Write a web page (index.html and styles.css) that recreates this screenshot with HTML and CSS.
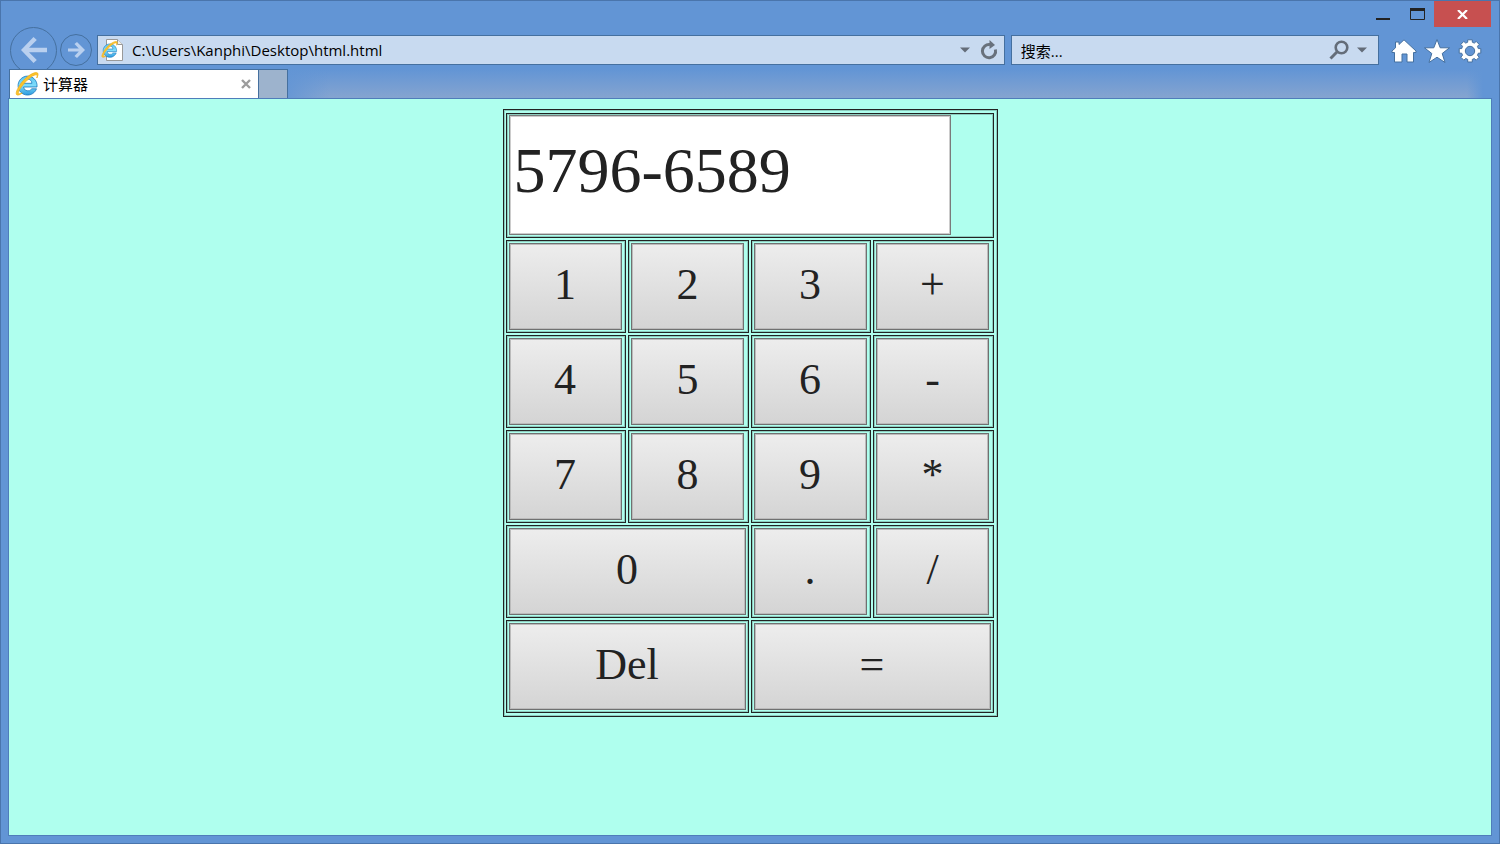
FILE: index.html
```html
<!DOCTYPE html>
<html lang="zh-CN">
	<head>
		<meta charset="UTF-8">
		<title>计算器</title>
		<link rel="stylesheet" href="styles.css">
	</head>
	<body>
		<!--渐变给两个ie图标用-->
		<svg class="defs" width="0" height="0">
			<defs>
				<linearGradient id="blue" x1="0" y1="0" x2="0" y2="1">
					<stop offset="0" stop-color="#5cc4f0"/>
					<stop offset=".5" stop-color="#7fdcfb"/>
					<stop offset="1" stop-color="#2b9ade"/>
				</linearGradient>
				<symbol id="ie" viewBox="0 0 24 24">
					<path d="M22 15H8.500a4.500 4.500 0 0 0 8.300 1.800h4.700A9.500 9.500 0 1 1 22 12.500zM8.500 11.300h8.400a4.200 4.200 0 0 0-8.400 0z" fill="url(#blue)" fill-rule="evenodd" stroke="#1b78bd" stroke-width=".8"/>
					<path d="M4 14.500C1.200 19 .4 22.600 2.200 23c1.200.3 3-.5 5-2-1.800.9-3.200 1.100-3.600.5-.7-1 .7-4 3.500-7.600C11.500 8.200 17 3.500 20.500 2.800c1.700-.3 2.100.8 1.300 3.200C23.500 2.700 23.500.8 21.500.6 17.500.2 8.500 6.500 4 14.500z" fill="#fcc32c" stroke="#f0b020" stroke-width=".8"/>
				</symbol>
			</defs>
		</svg>
		<div class="win"><!--窗口-->
			<div class="title"><!--标题栏-->
				<button class="min" aria-label="最小化"><svg width="14" height="2"><path d="M0 0h14v2H0z" fill="#222"/></svg></button>
				<button class="max" aria-label="最大化"><svg width="15" height="12"><path d="M.5.5h14v11H.5z" fill="none" stroke="#222"/><path d="M0 0h15v3H0z" fill="#222"/></svg></button>
				<button class="close" aria-label="关闭"><svg width="11" height="9" viewBox="0 0 11 9"><path d="M1 0l9 9M10 0L1 9" stroke="#fff" stroke-width="2.200"/></svg></button>
			</div>
			<div class="bar"><!--地址栏-->
				<button class="back" aria-label="后退"><svg width="26" height="26" viewBox="0 0 26 26"><path d="M12.500 0L15.800 3 8 10.800h18v4.400H8L15.800 23l-3.300 3L0 13z" fill="#b9d0ef"/></svg></button>
				<button class="next" aria-label="前进"><svg width="17" height="16" viewBox="0 0 17 16"><path d="M9 0L6.500 2l4.300 4.600H0v2.800h10.800L6.500 14 9 16l8-8z" fill="#b9d0ef"/></svg></button>
				<form class="box url">
					<svg class="page" width="23" height="22" viewBox="0 0 23 22">
						<path d="M5.500.5h11l5 5v16h-16z" fill="#fff" stroke="#999"/>
						<path d="M16.500.5v5h5" fill="#eee" stroke="#999"/>
						<use href="#ie" x="0" y="2" width="17" height="17"/>
					</svg>
					<input type="text" aria-label="地址" value="C:\Users\Kanphi\Desktop\html.html">
					<button type="button" aria-label="历史"><svg width="10" height="6"><path d="M0 .5h10L5 5.500z" fill="#646d79"/></svg></button>
					<button type="button" class="re" aria-label="刷新"><svg width="18" height="20" viewBox="0 0 18 20"><path d="M10 4.600A6.600 6.600 0 1 0 15.400 9.500" fill="none" stroke="#68717c" stroke-width="3"/><path d="M9.500 0l5.500 5-5.500 4z" fill="#68717c"/></svg></button>
				</form>
				<form class="box find">
					<input type="text" aria-label="搜索" value="搜索...">
					<button type="button" aria-label="搜索"><svg width="20" height="20" viewBox="0 0 20 20"><circle cx="12.500" cy="7.500" r="5.800" fill="none" stroke="#646d79" stroke-width="2.600"/><path d="M8.200 11.800L1.500 18.500" stroke="#646d79" stroke-width="3"/></svg></button>
					<button type="button" aria-label="选项"><svg width="10" height="6"><path d="M0 .5h10L5 5.500z" fill="#646d79"/></svg></button>
				</form>
				<div class="tools">
					<button aria-label="主页"><svg width="26" height="24" viewBox="0 0 26 24"><path d="M13 .8L25 12v1.500h-2.500V23h-6.500v-8h-5v8H3.500v-9.500H1V12l3.500-3.200V3h3.500v2.500z" fill="#fff" stroke="#45709f"/></svg></button>
					<button aria-label="收藏夹"><svg width="26" height="24" viewBox="0 0 26 24"><path d="M13 .5l3.200 8.300h9.300l-7.300 5.700 2.800 9L13 18.200 5 23.500l2.800-9L.5 8.800h9.300z" fill="#fff" stroke="#45709f"/></svg></button>
					<button aria-label="工具"><svg width="26" height="24" viewBox="0 0 26 24">
						<path d="M10.700 3.200V.8h4.600v2.400l2 .9 1.900-1.700 3 3-1.700 1.900.8 2.300h2.500v4.600h-2.500l-.8 2.100 1.700 1.900-3 3-1.900-1.700-2 .9v2.600h-4.600v-2.600l-2-.9-1.900 1.700-3-3 1.700-1.900-.8-2.100H2.200V9.600h2.500l.8-2.300-1.700-1.900 3-3 1.900 1.700z" fill="#fff" stroke="#45709f"/>
						<circle cx="13" cy="12" r="4.700" fill="#6294d4" stroke="#45709f"/></svg></button>
				</div>
			</div>
			<div class="tabs"><!--标签页-->
				<div class="tab">
					<svg width="24" height="24"><use href="#ie" width="24" height="24"/></svg>
					<span>计算器</span>
					<button aria-label="关闭标签页"><svg width="10" height="10"><path d="M1 1l8 8M9 1L1 9" stroke="#9c9c9c" stroke-width="2.400"/></svg></button>
				</div>
				<button class="new" aria-label="新建标签页"></button>
			</div>
			<div class="main">
				<table class="js">
					<tr>
						<td colspan="4" class="screen"><input type="text" class="t" id="t" aria-label="算式" value="5796-6589"></td>
					</tr>
					<tr>
						<td><button class="n">1</button></td>
						<td><button class="n">2</button></td>
						<td><button class="n">3</button></td>
						<td><button class="n">+</button></td>
					</tr>
					<tr>
						<td><button class="n">4</button></td>
						<td><button class="n">5</button></td>
						<td><button class="n">6</button></td>
						<td><button class="n">-</button></td>
					</tr>
					<tr>
						<td><button class="n">7</button></td>
						<td><button class="n">8</button></td>
						<td><button class="n">9</button></td>
						<td><button class="n">*</button></td>
					</tr>
					<tr>
						<td colspan="2"><button class="n w">0</button></td>
						<td><button class="n">.</button></td>
						<td><button class="n">/</button></td>
					</tr>
					<tr>
						<td colspan="2"><button class="n w">Del</button></td>
						<td colspan="2"><button class="n w">=</button></td>
					</tr>
				</table>
			</div>
		</div>
	</body>
</html>
```
FILE: styles.css
```css
*{
	margin: 0;
	padding: 0;
	box-sizing: border-box;
}
body{
	font-family: "Open Sans","Noto Sans CJK SC",sans-serif;
	font-size: 15px;
	color: #000;
}
svg{
	display: block;
}
.defs{
	position: absolute;
}
button{
	border: 0;
	background: none;
}
.win{
	min-height: 100vh;
	display: flex;
	flex-direction: column;
	padding: 0 8px 8px;
	border: 1px solid #4a75ac;
	background-color: #6295d5;
}
/*标题栏*/
.title{
	height: 26px;
	display: flex;
	justify-content: flex-end;
}
.title button{
	display: flex;
	justify-content: center;
	align-items: center;
}
.min{
	width: 34px;
	padding-top: 10px;
}
.max{
	width: 34px;
}
.close{
	width: 57px;
}
.title .close{
	background-color: #c75050;
}
/*地址栏*/
.bar{
	height: 42px;
	display: flex;
	align-items: center;
	padding: 4px 8px 0 1px;
}
.back,.next{
	display: flex;
	flex-shrink: 0;
	justify-content: center;
	align-items: center;
	border: 1px solid #45709f;
	border-radius: 50%;
}
.back{
	width: 47px;
	height: 47px;
}
.next{
	width: 32px;
	height: 32px;
	margin: 0 5px 0 3px;
}
.box{
	height: 30px;
	display: flex;
	align-items: center;
	border: 1px solid #45709f;
	background-color: #c8daf0;
}
.box input{
	flex: 1;
	min-width: 0;
	border: 0;
	background: none;
	font: inherit;
	outline: none;
}
.url{
	flex: 1;
	padding: 0 6px 0 3px;
}
.page{
	margin-right: 8px;
}
.re{
	margin-left: 10px;
}
.find{
	width: 25%;
	margin: 0 12px 0 6px;
	padding: 0 11px 0 9px;
	gap: 8px;
}
.tools{
	display: flex;
	gap: 7px;
	padding-top: 2px;
}
/*标签页*/
.tabs{
	height: 29px;
	display: flex;
	position: relative;
	background: linear-gradient(to right,#6295d5 270px,transparent 320px,transparent calc(100% - 24px),#6295d5 calc(100% - 8px)),linear-gradient(#6295d5,#85a4d0);
}
.tab{
	width: 250px;
	display: flex;
	align-items: center;
	padding: 0 7px 0 5px;
	border: 1px solid #45709f;
	border-bottom: 0;
	background-color: #fff;
}
.tab span{
	flex: 1;
	margin-left: 4px;
	padding-bottom: 2px;
}
.new{
	width: 29px;
	border: 1px solid #45709f;
	border-width: 1px 1px 0 0;
	background-color: #9db3cd;
}
.main{
	flex: 1;
	padding-top: 10px;
	border: 1px solid #4f7dba;
	margin: 0 -1px -1px;
	background-color: #afffee;
}
/*计算器*/
.js{
	width: 495px;
	margin: 0 auto;
	padding: 1px 1px 1px 0;
	border: 1px solid #222;
	border-spacing: 2px;
	table-layout: fixed;
	box-shadow: inset 0 0 0 1px #8cccbe;
}
.js td{
	height: 93px;
	padding: 2px;
	border: 1px solid #222;
	box-shadow: inset 0 0 0 1px #8cccbe;
}
.js .screen{
	height: 125px;
	padding: 1px 2px 2px;
}
.t{
	display: block;
	width: 442px;
	height: 120px;
	padding: 0 4px 8px;
	border: 1px solid #7a7a7a;
	box-shadow: inset 0 0 0 1px #ccc;
	font-family: "Liberation Serif",serif;
	font-size: 64px;
	color: #222;
}
.n{
	display: block;
	width: 113px;
	height: 87px;
	padding-bottom: 4px;
	border: 1px solid #707070;
	box-shadow: inset 0 0 0 1px #bbb;
	background: linear-gradient(#ededed,#d4d4d4);
	font-family: "Liberation Serif",serif;
	font-size: 44px;
	color: #222;
}
.w{
	width: 100%;
}
```
